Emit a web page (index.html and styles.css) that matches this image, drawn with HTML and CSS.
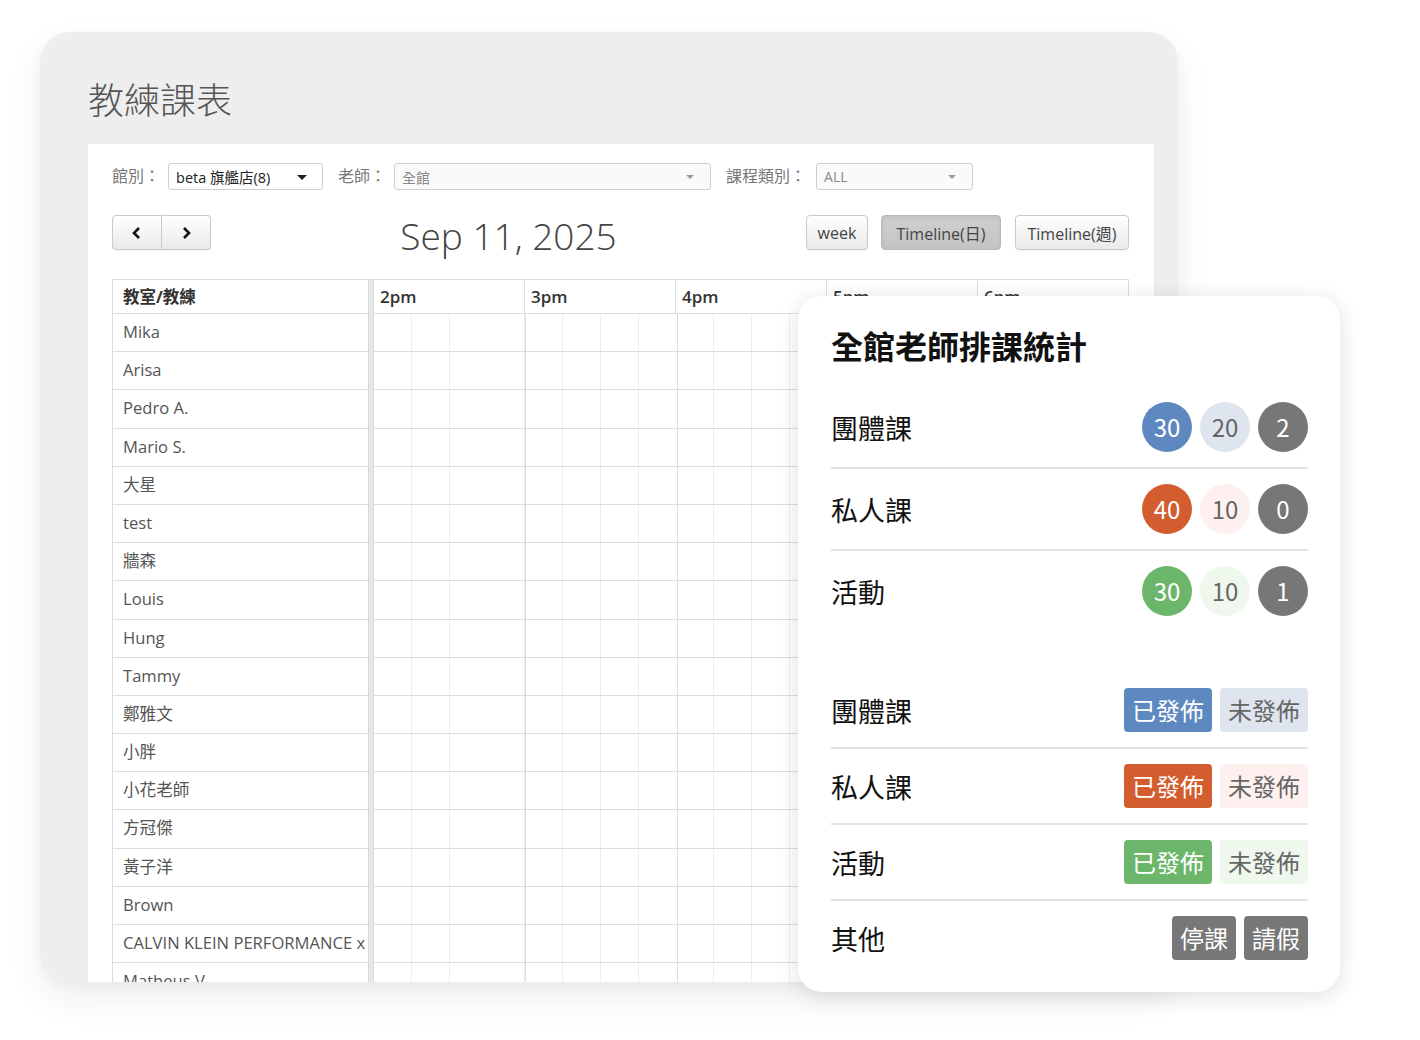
FILE: index.html
```html
<!DOCTYPE html>
<html lang="zh-Hant">
<head>
<meta charset="utf-8">
<title>教練課表</title>
<link rel="stylesheet" href="styles.css">
</head>
<body>
<div class="stage">
  <div class="card">
    <h1 class="card-title">教練課表</h1>
    <div class="sheet">
      <div class="filters">
        <span class="flabel">館別：</span>
        <div class="select select-store"><span class="sel-text">beta 旗艦店(8)</span><span class="caret dark"></span></div>
        <span class="flabel">老師：</span>
        <div class="select select-teacher"><span class="sel-text muted">全館</span><span class="caret"></span></div>
        <span class="flabel">課程類別：</span>
        <div class="select select-type"><span class="sel-text muted">ALL</span><span class="caret"></span></div>
      </div>

      <div class="toolbar">
        <div class="btn-group">
          <button class="btn nav-btn" type="button" aria-label="prev">
            <svg width="12" height="14" viewBox="0 0 12 14"><polyline points="8,2 3,7 8,12" fill="none" stroke="#111" stroke-width="2.6" stroke-linejoin="miter"/></svg>
          </button>
          <button class="btn nav-btn" type="button" aria-label="next">
            <svg width="12" height="14" viewBox="0 0 12 14"><polyline points="4,2 9,7 4,12" fill="none" stroke="#111" stroke-width="2.6" stroke-linejoin="miter"/></svg>
          </button>
        </div>
        <div class="date-title">Sep 11, 2025</div>
        <div class="views">
          <button class="btn view-btn btn-week" type="button">week</button>
          <button class="btn view-btn btn-day active" type="button">Timeline(日)</button>
          <button class="btn view-btn btn-wk" type="button">Timeline(週)</button>
        </div>
      </div>

      <div class="grid">
        <div class="res-col">
          <div class="res-head">教室/教練</div>
          <div class="res-row">Mika</div>
          <div class="res-row">Arisa</div>
          <div class="res-row">Pedro A.</div>
          <div class="res-row">Mario S.</div>
          <div class="res-row">大星</div>
          <div class="res-row">test</div>
          <div class="res-row">牆森</div>
          <div class="res-row">Louis</div>
          <div class="res-row">Hung</div>
          <div class="res-row">Tammy</div>
          <div class="res-row">鄭雅文</div>
          <div class="res-row">小胖</div>
          <div class="res-row">小花老師</div>
          <div class="res-row">方冠傑</div>
          <div class="res-row">黃子洋</div>
          <div class="res-row">Brown</div>
          <div class="res-row">CALVIN KLEIN PERFORMANCE x</div>
          <div class="res-row">Matheus V.</div>
        </div>
        <div class="divider"></div>
        <div class="tl-col">
          <div class="tl-head">
            <div class="tl-hour">2pm</div>
            <div class="tl-hour">3pm</div>
            <div class="tl-hour">4pm</div>
            <div class="tl-hour">5pm</div>
            <div class="tl-hour">6pm</div>
          </div>
          <div class="tl-body">
            <div class="tl-row"></div><div class="tl-row"></div><div class="tl-row"></div>
            <div class="tl-row"></div><div class="tl-row"></div><div class="tl-row"></div>
            <div class="tl-row"></div><div class="tl-row"></div><div class="tl-row"></div>
            <div class="tl-row"></div><div class="tl-row"></div><div class="tl-row"></div>
            <div class="tl-row"></div><div class="tl-row"></div><div class="tl-row"></div>
            <div class="tl-row"></div><div class="tl-row"></div><div class="tl-row"></div>
          </div>
        </div>
      </div>
    </div>
  </div>

  <div class="stats">
    <h2 class="stats-title">全館老師排課統計</h2>
    <div class="stat-group">
      <div class="stat-row">
        <span class="stat-label">團體課</span>
        <div class="dots">
          <span class="dot blue">30</span><span class="dot blue-light">20</span><span class="dot grey">2</span>
        </div>
      </div>
      <div class="stat-row">
        <span class="stat-label">私人課</span>
        <div class="dots">
          <span class="dot orange">40</span><span class="dot orange-light">10</span><span class="dot grey">0</span>
        </div>
      </div>
      <div class="stat-row">
        <span class="stat-label">活動</span>
        <div class="dots">
          <span class="dot green">30</span><span class="dot green-light">10</span><span class="dot grey">1</span>
        </div>
      </div>
    </div>
    <div class="legend-group">
      <div class="legend-row">
        <span class="stat-label">團體課</span>
        <div class="tags"><span class="tag blue">已發佈</span><span class="tag blue-light">未發佈</span></div>
      </div>
      <div class="legend-row">
        <span class="stat-label">私人課</span>
        <div class="tags"><span class="tag orange">已發佈</span><span class="tag orange-light">未發佈</span></div>
      </div>
      <div class="legend-row">
        <span class="stat-label">活動</span>
        <div class="tags"><span class="tag green">已發佈</span><span class="tag green-light">未發佈</span></div>
      </div>
      <div class="legend-row">
        <span class="stat-label">其他</span>
        <div class="tags"><span class="tag grey small">停課</span><span class="tag grey small">請假</span></div>
      </div>
    </div>
  </div>
</div>
</body>
</html>
```

FILE: styles.css
```css
* { box-sizing: border-box; }

html, body {
  margin: 0;
  padding: 0;
  background: #ffffff;
}

body {
  font-family: "Open Sans", "Noto Sans CJK TC", sans-serif;
  color: #333;
}

.stage {
  position: relative;
  width: 1420px;
  height: 1040px;
  padding: 32px 0 0 40px;
  overflow: hidden;
}

/* background card */
.card {
  width: 1138px;
  height: 950px;
  background: #eeeeee;
  border-radius: 30px;
  overflow: hidden;
  padding: 0 24px 0 48px;
  box-shadow: 0 16px 36px rgba(0, 0, 0, 0.07), 0 4px 12px rgba(0, 0, 0, 0.03);
}

.card-title {
  margin: 0;
  padding-top: 41px;
  height: 112px;
  font-family: "Noto Sans CJK TC", sans-serif;
  font-weight: 200;
  font-size: 36px;
  line-height: 50px;
  color: #555;
}

.sheet {
  background: #fff;
  padding: 19px 25px 0 24px;
  height: 1200px;
}

/* filters */
.filters {
  display: flex;
  align-items: center;
  height: 27px;
}

.flabel {
  font-family: "Noto Sans CJK TC", sans-serif;
  font-size: 16px;
  line-height: 1;
  color: #777;
  margin-right: 8px;
  margin-top: -3px;
  white-space: nowrap;
}

.select {
  position: relative;
  height: 27px;
  border: 1px solid #cfcfcf;
  border-radius: 3px;
  background: #fff;
  display: flex;
  align-items: center;
  padding-left: 7px;
  margin-right: 15px;
}

.select-store { width: 155px; }
.select-teacher { width: 317px; background: #fafafa; }
.select-type { width: 157px; background: #fafafa; margin-left: 2px; }

.sel-text {
  font-size: 14.5px;
  color: #222;
  white-space: nowrap;
}

.sel-text.muted { color: #888; font-size: 14px; }

.caret {
  position: absolute;
  right: 16px;
  top: 11px;
  width: 0;
  height: 0;
  border-left: 4px solid transparent;
  border-right: 4px solid transparent;
  border-top: 4px solid #999;
}

.caret.dark {
  right: 15px;
  border-left-width: 5px;
  border-right-width: 5px;
  border-top: 5px solid #222;
}

/* toolbar */
.toolbar {
  display: flex;
  align-items: center;
  margin-top: 25px;
  height: 35px;
}

.btn {
  height: 35px;
  border: 1px solid #c9c9c9;
  border-radius: 4px;
  background: linear-gradient(#ffffff, #e9e9e9);
  font-family: "Open Sans", "Noto Sans CJK TC", sans-serif;
  font-size: 16px;
  color: #444;
  padding: 0;
  margin: 0;
  display: flex;
  align-items: center;
  justify-content: center;
  box-shadow: 0 1px 1px rgba(0, 0, 0, 0.05);
}

.btn-group { display: flex; }

.nav-btn {
  width: 50px;
}

.nav-btn:first-child {
  border-radius: 4px 0 0 4px;
}

.nav-btn:last-child {
  border-radius: 0 4px 4px 0;
  border-left: none;
  width: 49px;
}

.date-title {
  flex: 1;
  text-align: center;
  font-family: "Open Sans", sans-serif;
  font-weight: 300;
  font-size: 37px;
  color: #444;
  line-height: 35px;
  padding-top: 6px;
}

.views {
  display: flex;
}

.btn-week { width: 62px; }
.btn-day { width: 120px; margin-left: 13px; }
.btn-wk { width: 114px; margin-left: 14px; }

.view-btn.active {
  background: linear-gradient(#cfcfcf, #c4c4c4);
  border-color: #b8b8b8;
  box-shadow: inset 0 2px 4px rgba(0, 0, 0, 0.08);
  color: #444;
}

/* grid */
.grid {
  display: flex;
  margin-top: 29px;
  border-top: 1px solid #dddddd;
}

.res-col {
  width: 256px;
  border-left: 1px solid #dddddd;
}

.res-head {
  height: 34px;
  border-bottom: 1px solid #dddddd;
  padding-left: 10px;
  font-weight: 700;
  font-size: 16.5px;
  line-height: 33px;
  color: #333;
}

.res-row {
  height: 38.2px;
  border-bottom: 1px solid #dddddd;
  padding-left: 10px;
  font-size: 16.6px;
  font-weight: 400;
  line-height: 36px;
  color: #555;
  white-space: nowrap;
  overflow: hidden;
}

.divider {
  width: 6px;
  background: #e7e7e7;
  border-left: 1px solid #d9d9d9;
  border-right: 1px solid #d9d9d9;
}

.tl-col {
  flex: 1;
  border-right: 1px solid #dddddd;
}

.tl-head {
  display: flex;
  height: 34px;
  border-bottom: 1px solid #dddddd;
}

.tl-hour {
  flex: 1;
  padding-left: 6px;
  font-weight: 600;
  font-size: 17px;
  line-height: 33px;
  color: #333;
  border-left: 1px solid #dddddd;
}

.tl-hour:first-child { border-left: none; }

.tl-body {
  background-image:
    repeating-linear-gradient(to right, transparent 0 151px, #dddddd 151px 152.2px),
    repeating-linear-gradient(to right, transparent 0 37px, #eeeeee 37px 37.8px);
}

.tl-row {
  height: 38.2px;
  border-bottom: 1px solid #dddddd;
}

/* stats overlay */
.stats {
  position: absolute;
  left: 798px;
  top: 296px;
  width: 542px;
  height: 696px;
  background: #fff;
  border-radius: 24px;
  padding: 27px 32px 0 33px;
  box-shadow: 0 4px 22px rgba(0, 0, 0, 0.13);
  font-family: "Noto Sans CJK TC", sans-serif;
}

.stats-title {
  margin: 0;
  font-size: 32px;
  font-weight: 700;
  line-height: 44px;
  color: #111;
}

.stat-group {
  margin-top: 20px;
}

.stat-row {
  height: 82px;
  display: flex;
  align-items: center;
  justify-content: space-between;
  border-bottom: 2px solid #e2e2e2;
}

.stat-row:last-child { border-bottom: none; height: 80px; }

.stat-label {
  font-size: 27px;
  color: #111;
  line-height: 1;
}

.dots {
  display: flex;
  gap: 8px;
}

.dot {
  width: 50px;
  height: 50px;
  border-radius: 50%;
  display: flex;
  align-items: center;
  justify-content: center;
  font-size: 24px;
  color: #fff;
  line-height: 1;
}

.legend-group {
  margin-top: 42px;
}

.legend-row {
  height: 76px;
  display: flex;
  align-items: center;
  justify-content: space-between;
  border-bottom: 2px solid #e2e2e2;
}

.legend-row:last-child { border-bottom: none; height: 74px; }

.tags {
  display: flex;
  gap: 8px;
}

.tag {
  height: 44px;
  padding: 0 8px;
  border-radius: 4px;
  display: flex;
  align-items: center;
  font-size: 24px;
  color: #fff;
  line-height: 1;
  white-space: nowrap;
}

.blue { background: #5d89c0; color: #fff; }
.blue-light { background: #dfe5ef; color: #666; }
.orange { background: #d35d2f; color: #fff; }
.orange-light { background: #fdf0ee; color: #666; }
.green { background: #6cb66b; color: #fff; }
.green-light { background: #eef8ec; color: #666; }
.grey { background: #777777; color: #fff; }
```
